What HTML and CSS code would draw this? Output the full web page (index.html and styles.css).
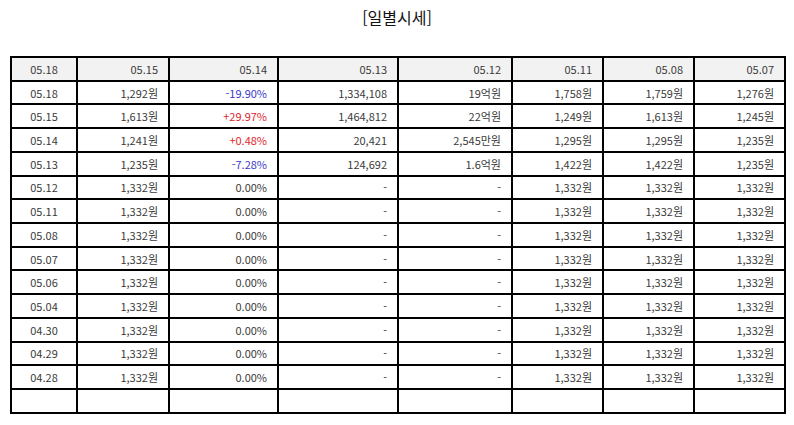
FILE: index.html
```html
<!DOCTYPE html>
<html lang="ko">
<head>
<meta charset="utf-8">
<title>일별시세</title>
<link rel="stylesheet" href="styles.css">
</head>
<body>
<div class="wrap">
  <h1 class="title">[일별시세]</h1>
  <table class="grid">
    <colgroup>
      <col class="c1"><col class="c2"><col class="c3"><col class="c4"><col class="c5"><col class="c6"><col class="c7"><col class="c8">
    </colgroup>
    <thead>
      <tr><th>05.18</th><th>05.15</th><th>05.14</th><th>05.13</th><th>05.12</th><th>05.11</th><th>05.08</th><th>05.07</th></tr>
    </thead>
    <tbody>
      <tr><td>05.18</td><td>1,292원</td><td class="dn">-19.90%</td><td>1,334,108</td><td>19억원</td><td>1,758원</td><td>1,759원</td><td>1,276원</td></tr>
      <tr><td>05.15</td><td>1,613원</td><td class="up">+29.97%</td><td>1,464,812</td><td>22억원</td><td>1,249원</td><td>1,613원</td><td>1,245원</td></tr>
      <tr><td>05.14</td><td>1,241원</td><td class="up">+0.48%</td><td>20,421</td><td>2,545만원</td><td>1,295원</td><td>1,295원</td><td>1,235원</td></tr>
      <tr><td>05.13</td><td>1,235원</td><td class="dn">-7.28%</td><td>124,692</td><td>1.6억원</td><td>1,422원</td><td>1,422원</td><td>1,235원</td></tr>
      <tr><td>05.12</td><td>1,332원</td><td>0.00%</td><td>-</td><td>-</td><td>1,332원</td><td>1,332원</td><td>1,332원</td></tr>
      <tr><td>05.11</td><td>1,332원</td><td>0.00%</td><td>-</td><td>-</td><td>1,332원</td><td>1,332원</td><td>1,332원</td></tr>
      <tr><td>05.08</td><td>1,332원</td><td>0.00%</td><td>-</td><td>-</td><td>1,332원</td><td>1,332원</td><td>1,332원</td></tr>
      <tr><td>05.07</td><td>1,332원</td><td>0.00%</td><td>-</td><td>-</td><td>1,332원</td><td>1,332원</td><td>1,332원</td></tr>
      <tr><td>05.06</td><td>1,332원</td><td>0.00%</td><td>-</td><td>-</td><td>1,332원</td><td>1,332원</td><td>1,332원</td></tr>
      <tr><td>05.04</td><td>1,332원</td><td>0.00%</td><td>-</td><td>-</td><td>1,332원</td><td>1,332원</td><td>1,332원</td></tr>
      <tr><td>04.30</td><td>1,332원</td><td>0.00%</td><td>-</td><td>-</td><td>1,332원</td><td>1,332원</td><td>1,332원</td></tr>
      <tr><td>04.29</td><td>1,332원</td><td>0.00%</td><td>-</td><td>-</td><td>1,332원</td><td>1,332원</td><td>1,332원</td></tr>
      <tr><td>04.28</td><td>1,332원</td><td>0.00%</td><td>-</td><td>-</td><td>1,332원</td><td>1,332원</td><td>1,332원</td></tr>
      <tr><td></td><td></td><td></td><td></td><td></td><td></td><td></td><td></td></tr>
    </tbody>
  </table>
</div>
</body>
</html>
```
FILE: styles.css
```css
html, body {
  margin: 0;
  padding: 0;
  background: #fff;
}
body {
  font-family: "Noto Sans CJK KR", "Noto Sans", sans-serif;
  color: #222;
}
.wrap {
  padding: 0 10px;
}
.title {
  margin: 0;
  padding-top: 5px;
  height: 56px;
  box-sizing: border-box;
  text-align: center;
  font-size: 16px;
  font-weight: 400;
  line-height: 24px;
  color: #111;
}
.grid {
  width: 776px;
  border: 1px solid #000;
  border-collapse: separate;
  border-spacing: 0;
  table-layout: fixed;
  font-size: 11px;
}
.c1 { width: 66px; }
.c2 { width: 92px; }
.c3 { width: 109px; }
.c4 { width: 120px; }
.c5 { width: 114px; }
.c6 { width: 91px; }
.c7 { width: 91px; }
.c8 { width: 91px; }
.grid th,
.grid td {
  border: 1px solid #000;
  height: 21.73px;
  padding: 0 10px 0 0;
  text-align: right;
  font-weight: 400;
  color: #3a3a3a;
  line-height: 14px;
  white-space: nowrap;
}
.grid th {
  background: #f2f2f2;
}
.grid th:first-child,
.grid td:first-child {
  text-align: center;
  padding: 0;
}
.grid td.up { color: #e0252b; }
.grid td.dn { color: #3a3acb; }
```
